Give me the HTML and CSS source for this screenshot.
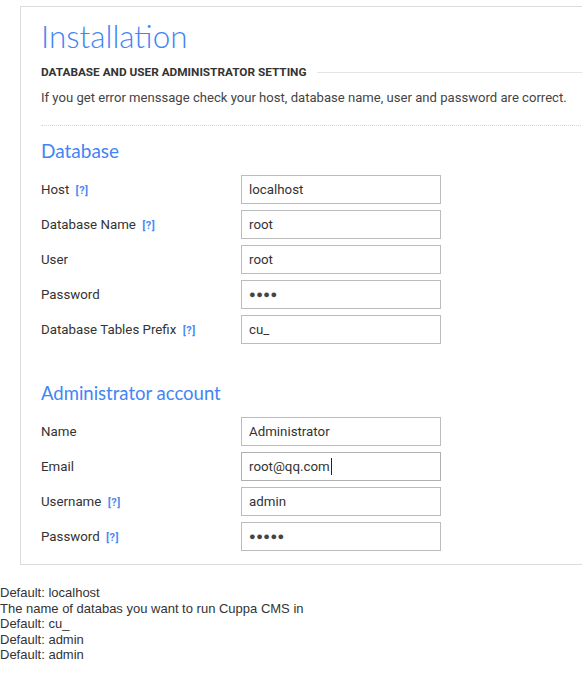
FILE: index.html
```html
<!DOCTYPE html>
<html>
<head>
<meta charset="utf-8">
<title>Installation</title>
<link rel="stylesheet" href="styles.css">
</head>
<body>
<div class="panel">
  <h1 class="title">Installation</h1>
  <div class="subhead"><span class="subhead-text">DATABASE AND USER ADMINISTRATOR SETTING</span><span class="subhead-line"></span></div>
  <p class="intro">If you get error menssage check your host, database name, user and password are correct.</p>
  <div class="dotted"></div>

  <h2 class="section">Database</h2>
  <div class="row"><div class="label">Host <span class="help">[?]</span></div><div class="field">localhost</div></div>
  <div class="row"><div class="label">Database Name <span class="help">[?]</span></div><div class="field">root</div></div>
  <div class="row"><div class="label">User</div><div class="field">root</div></div>
  <div class="row"><div class="label">Password</div><div class="field dots">&#9679;&#9679;&#9679;&#9679;</div></div>
  <div class="row"><div class="label">Database Tables Prefix <span class="help">[?]</span></div><div class="field">cu_</div></div>

  <h2 class="section section-admin">Administrator account</h2>
  <div class="row"><div class="label">Name</div><div class="field">Administrator</div></div>
  <div class="row"><div class="label">Email</div><div class="field focus">root@qq.com<span class="caret"></span></div></div>
  <div class="row"><div class="label">Username <span class="help">[?]</span></div><div class="field">admin</div></div>
  <div class="row"><div class="label">Password <span class="help">[?]</span></div><div class="field dots">&#9679;&#9679;&#9679;&#9679;&#9679;</div></div>
</div>
<div class="tips">
  <div>Default: localhost</div>
  <div>The name of databas you want to run Cuppa CMS in</div>
  <div>Default: cu_</div>
  <div>Default: admin</div>
  <div>Default: admin</div>
</div>
</body>
</html>
```

FILE: styles.css
```css
html, body {
  margin: 0;
  padding: 0;
  background: #fff;
  overflow-x: hidden;
}
body {
  font-family: Roboto, "Liberation Sans", sans-serif;
  color: #333;
}
.panel {
  margin: 6px 0 0 20px;
  width: 620px;
  border: 1px solid #dcdcdc;
  padding: 0 20px 7px 20px;
  box-sizing: border-box;
}
.title {
  font-family: Lato, sans-serif;
  font-weight: 300;
  font-size: 31.4px;
  line-height: 40px;
  color: #4285f4;
  margin: 9px 0 0 0;
}
.subhead {
  display: flex;
  align-items: center;
  margin-top: 8px;
  height: 16px;
}
.subhead-text {
  font-size: 11.8px;
  font-weight: bold;
  color: #333;
  white-space: nowrap;
  margin-right: 10px;
}
.subhead-line {
  flex: 1;
  border-top: 1px solid #e4e4e4;
}
.intro {
  font-size: 13.1px;
  color: #444;
  margin: 9px 0 0 0;
  line-height: 18px;
  white-space: nowrap;
}
.dotted {
  margin-top: 18px;
  border-top: 1px dotted #d6d6d6;
}
.section {
  font-family: Lato, sans-serif;
  font-weight: 400;
  font-size: 19px;
  line-height: 26px;
  color: #4285f4;
  margin: 12px 0 11px 0;
}
.section-admin {
  margin-top: 36px;
  font-size: 18.5px;
}
.row {
  display: flex;
  align-items: center;
  height: 29px;
  margin-bottom: 6px;
}
.label {
  width: 200px;
  font-size: 13.3px;
  color: #333;
}
.help {
  font-size: 11px;
  font-weight: bold;
  color: #4a8af4;
  margin-left: 3px;
  letter-spacing: 0.5px;
}
.field {
  box-sizing: border-box;
  width: 200px;
  height: 29px;
  border: 1px solid #bcbcbc;
  padding: 0 7px;
  font-size: 13.3px;
  color: #333;
  display: flex;
  align-items: center;
}
.field.focus {
  border-color: #b0b0b0;
}
.field.dots {
  font-size: 11px;
  letter-spacing: 0.5px;
  color: #444;
}
.caret {
  display: inline-block;
  width: 1px;
  height: 17px;
  background: #222;
  margin-left: 1px;
}
.tips {
  margin-top: 20px;
  font-family: "Liberation Sans", Arial, sans-serif;
  font-size: 13px;
  line-height: 15.5px;
  color: #333;
}
```
